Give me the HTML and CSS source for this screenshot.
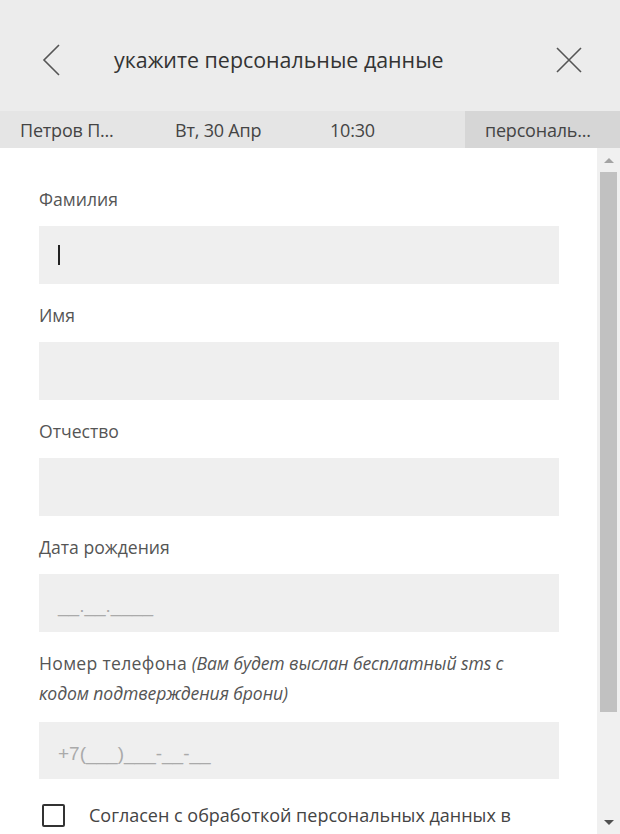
FILE: index.html
```html
<!DOCTYPE html>
<html lang="ru">
<head>
<meta charset="utf-8">
<title>укажите персональные данные</title>
<link rel="stylesheet" href="styles.css">
</head>
<body>
<div class="app">
  <header class="topbar">
    <button class="icon-btn back" aria-label="Назад">
      <svg width="18" height="32" viewBox="0 0 18 32"><path d="M17 1 L2 16 L17 31" fill="none" stroke="#555" stroke-width="1.6"/></svg>
    </button>
    <h1 class="title">укажите персональные данные</h1>
    <button class="icon-btn close" aria-label="Закрыть">
      <svg width="26" height="26" viewBox="0 0 26 26"><path d="M1 1 L25 25 M25 1 L1 25" fill="none" stroke="#555" stroke-width="1.6"/></svg>
    </button>
  </header>
  <nav class="steps">
    <div class="step">Петров П...</div>
    <div class="step">Вт, 30 Апр</div>
    <div class="step">10:30</div>
    <div class="step active">персональ...</div>
  </nav>
  <div class="body">
    <form class="form">
      <div class="field">
        <label class="label">Фамилия</label>
        <div class="input"><span class="caret"></span></div>
      </div>
      <div class="field">
        <label class="label">Имя</label>
        <div class="input"></div>
      </div>
      <div class="field">
        <label class="label">Отчество</label>
        <div class="input"></div>
      </div>
      <div class="field">
        <label class="label">Дата рождения</label>
        <div class="input"><span class="placeholder">__.__.____</span></div>
      </div>
      <div class="field phone">
        <label class="label"><span class="label-main">Номер телефона</span> <em class="hint">(Вам будет выслан бесплатный sms с кодом подтверждения брони)</em></label>
        <div class="input"><span class="placeholder">+7(___)___-__-__</span></div>
      </div>
      <div class="agree">
        <span class="checkbox"></span>
        <span class="agree-text">Согласен с обработкой персональных данных в соответствии с политикой конфиденциальности</span>
      </div>
    </form>
    <div class="scrollbar">
      <div class="arrow up"></div>
      <div class="track"><div class="thumb"></div></div>
      <div class="arrow down"></div>
    </div>
  </div>
</div>
</body>
</html>
```

FILE: styles.css
```css
* { box-sizing: border-box; }
html, body { margin: 0; padding: 0; }
body {
  width: 620px;
  height: 834px;
  overflow: hidden;
  background: #fff;
  font-family: "Open Sans", "Noto Sans", sans-serif;
}
.app {
  display: flex;
  flex-direction: column;
  height: 834px;
}
.topbar {
  height: 111px;
  flex: none;
  background: #ececec;
  display: flex;
  align-items: center;
  padding-top: 8px;
}
.icon-btn {
  border: 0;
  background: none;
  padding: 0;
  display: flex;
}
.back { margin-left: 42px; }
.title {
  margin: 0 0 0 54px;
  font-family: "Open Sans", sans-serif;
  font-weight: 400;
  font-size: 21.4px;
  color: #333;
}
.close { margin-left: auto; margin-right: 38px; }

.steps {
  height: 37px;
  flex: none;
  background: #e5e5e5;
  display: grid;
  grid-template-columns: repeat(4, 155px);
}
.step {
  padding-left: 20px;
  display: flex;
  align-items: center;
  font-family: "Open Sans", sans-serif;
  font-size: 18px;
  color: #444;
  letter-spacing: -0.2px;
  white-space: nowrap;
  overflow: hidden;
}
.step.active { background: #d6d6d6; }

.body {
  flex: 1;
  display: flex;
  overflow: hidden;
}
.form {
  width: 597px;
  flex: none;
  padding: 36px 38px 0 39px;
  margin: 0;
  overflow: hidden;
}
.field { margin-bottom: 16px; }
.label {
  display: block;
  font-family: "Open Sans", sans-serif;
  font-size: 17.6px;
  line-height: 30px;
  color: #555;
}
.label-main { letter-spacing: 0.3px; }
.phone .label { padding-right: 30px; }
.hint { font-style: italic; letter-spacing: -0.1px; }
.input {
  margin-top: 12px;
  height: 58px;
  background: #efefef;
  display: flex;
  align-items: center;
  padding-left: 19px;
}
.phone .input { margin-top: 14px; height: 57px; }
.caret {
  width: 2px;
  height: 20px;
  background: #222;
}
.placeholder {
  font-family: "Liberation Sans", Arial, sans-serif;
  font-size: 19px;
  color: #aaa;
  padding-top: 6px;
}
.agree {
  margin-top: 25px;
  display: flex;
  align-items: flex-start;
}
.checkbox {
  flex: none;
  width: 23px;
  height: 23px;
  border: 2px solid #333;
  border-radius: 2px;
  margin-left: 3px;
  margin-right: 24px;
}
.agree-text {
  font-family: "Open Sans", sans-serif;
  font-size: 18px;
  line-height: 32px;
  color: #444;
  margin-top: -5px;
}

.scrollbar {
  width: 23px;
  flex: none;
  background: #f0f0f0;
  display: flex;
  flex-direction: column;
  align-items: center;
}
.arrow {
  height: 24px;
  width: 100%;
  display: flex;
  justify-content: center;
  align-items: center;
}
.arrow::before {
  content: "";
  border-left: 5px solid transparent;
  border-right: 5px solid transparent;
}
.arrow.up::before { border-bottom: 5px solid #a3a3a3; }
.arrow.down::before { border-top: 5px solid #505050; }
.track {
  flex: 1;
  width: 100%;
  padding: 0 3px;
}
.thumb {
  height: 540px;
  background: #c1c1c1;
}
```
